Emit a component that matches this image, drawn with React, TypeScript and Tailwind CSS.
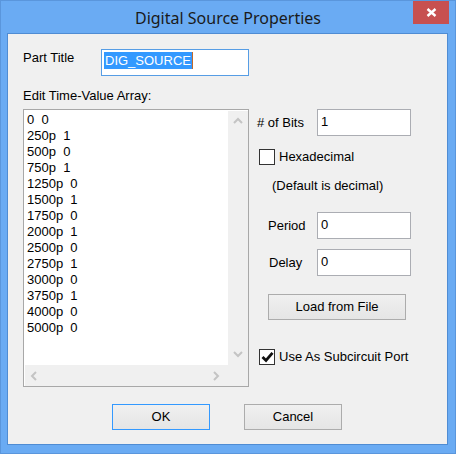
import React from "react";

const font = { fontFamily: '"Liberation Sans", Arial, sans-serif' };

const lines = [
  "0  0",
  "250p  1",
  "500p  0",
  "750p  1",
  "1250p  0",
  "1500p  1",
  "1750p  0",
  "2000p  1",
  "2500p  0",
  "2750p  1",
  "3000p  0",
  "3750p  1",
  "4000p  0",
  "5000p  0",
];

function Chevron({ dir }: { dir: "up" | "down" | "left" | "right" }) {
  const rot = { up: 0, down: 180, left: -90, right: 90 }[dir];
  return (
    <svg width="10" height="10" viewBox="0 0 10 10" style={{ transform: `rotate(${rot}deg)` }}>
      <path d="M1 7 L5 3 L9 7" fill="none" stroke="#c4c4c4" strokeWidth="2" />
    </svg>
  );
}

function TextBox({ value }: { value: string }) {
  return (
    <div className="w-[94px] h-[27px] border border-[#abadb3] bg-white pl-[3px] pt-[4px] text-[13px] leading-[16px] text-black">
      {value}
    </div>
  );
}

function Checkbox({ checked }: { checked: boolean }) {
  return (
    <div className="w-[16px] h-[16px] border border-[#333] bg-white flex items-center justify-center">
      {checked && (
        <svg width="13" height="12" viewBox="0 0 13 12">
          <path d="M1.5 6 L5 9.5 L11.5 1.8" fill="none" stroke="#111" strokeWidth="2.8" />
        </svg>
      )}
    </div>
  );
}

function Button({ label, def, w }: { label: string; def?: boolean; w: string }) {
  return (
    <div
      className={`${w} h-[26px] flex items-center justify-center text-[13px] text-black bg-gradient-to-b from-[#f0f0f0] to-[#e5e5e5] border ${
        def ? "border-[#3399ff]" : "border-[#acacac]"
      }`}
    >
      {label}
    </div>
  );
}

export default function App() {
  return (
    <div
      className="relative w-[456px] h-[454px] bg-[#6aabf3] border border-[#5a96dc] flex flex-col"
      style={font}
    >
      {/* title bar */}
      <div className="h-[32px] flex items-center justify-center pt-[2px]">
        <span className="text-[16px] text-[#1a1a1a]" style={{ fontFamily: '"Noto Sans", "Open Sans", sans-serif' }}>
          Digital Source Properties
        </span>
      </div>
      <div className="absolute top-0 right-[6px] w-[36px] h-[23px] bg-[#c75050] flex items-center justify-center">
        <svg width="11" height="9" viewBox="0 0 11 9">
          <path d="M1.5 1 L9.5 8 M9.5 1 L1.5 8" stroke="#fff" strokeWidth="2.4" />
        </svg>
      </div>

      {/* client area */}
      <div className="mx-[6px] border border-[#4f8cd3] bg-[#f0f0f0] w-[441px] h-[412px] text-[13px] text-black">
        <div className="pl-[15px] pt-[15px] flex flex-col">
          {/* Part title */}
          <div className="flex items-start h-[27px]">
            <div className="w-[78px] leading-[16px] pt-[1px]">Part Title</div>
            <div className="w-[148px] h-[27px] border border-[#569de5] bg-white pl-[2px] pt-[2px] flex">
              <div className="h-[17px] bg-[#3399ff] text-white leading-[17px] pl-[1px] pr-[0px] flex">
                <span>DIG_SOURCE</span>
                <span className="w-[1px] h-[17px] bg-[#c46a2a] ml-[1px]"></span>
              </div>
            </div>
          </div>

          <div className="mt-[12px] leading-[16px]">Edit Time-Value Array:</div>

          <div className="mt-[5px] flex items-start">
            {/* text area */}
            <div className="w-[226px] h-[278px] border border-[#a8a8a8] bg-white pt-[1px] pl-[1px] flex flex-col">
              <div className="flex flex-1">
                <div className="flex-1 pl-[2px] pt-[1px] leading-[16px] whitespace-pre">
                  {lines.map((l) => (
                    <div key={l}>{l}</div>
                  ))}
                </div>
                <div className="w-[20px] bg-[#f0f0f0] flex flex-col justify-between items-center pt-[5px] pb-[6px]">
                  <Chevron dir="up" />
                  <Chevron dir="down" />
                </div>
              </div>
              <div className="h-[21px] flex">
                <div className="flex-1 bg-[#f0f0f0] flex items-center justify-between pl-[4px] pr-[7px]">
                  <Chevron dir="left" />
                  <Chevron dir="right" />
                </div>
                <div className="w-[20px] bg-[#f0f0f0]"></div>
              </div>
            </div>

            {/* right column */}
            <div className="ml-[8px] flex flex-col">
              <div className="flex items-center h-[27px]">
                <div className="w-[60px]">
                  <span># of Bits</span>
                </div>
                <TextBox value="1" />
              </div>
              <div className="mt-[13px] flex items-center pl-[2px] h-[16px]">
                <Checkbox checked={false} />
                <span className="ml-[4px]">Hexadecimal</span>
              </div>
              <div className="mt-[13px] pl-[15px] leading-[16px]">(Default is decimal)</div>
              <div className="mt-[18px] flex items-center h-[27px]">
                <div className="w-[60px] pl-[11px]">Period</div>
                <TextBox value="0" />
              </div>
              <div className="mt-[10px] flex items-center h-[27px]">
                <div className="w-[60px] pl-[12px]">Delay</div>
                <TextBox value="0" />
              </div>
              <div className="mt-[18px] pl-[11px]">
                <Button label="Load from File" w="w-[138px]" />
              </div>
              <div className="mt-[29px] flex items-center pl-[2px] h-[16px]">
                <Checkbox checked={true} />
                <span className="ml-[4px]">Use As Subcircuit Port</span>
              </div>
            </div>
          </div>

          {/* bottom buttons */}
          <div className="mt-[17px] flex pl-[89px] gap-[34px]">
            <Button label="OK" def w="w-[98px]" />
            <Button label="Cancel" w="w-[98px]" />
          </div>
        </div>
      </div>
    </div>
  );
}
